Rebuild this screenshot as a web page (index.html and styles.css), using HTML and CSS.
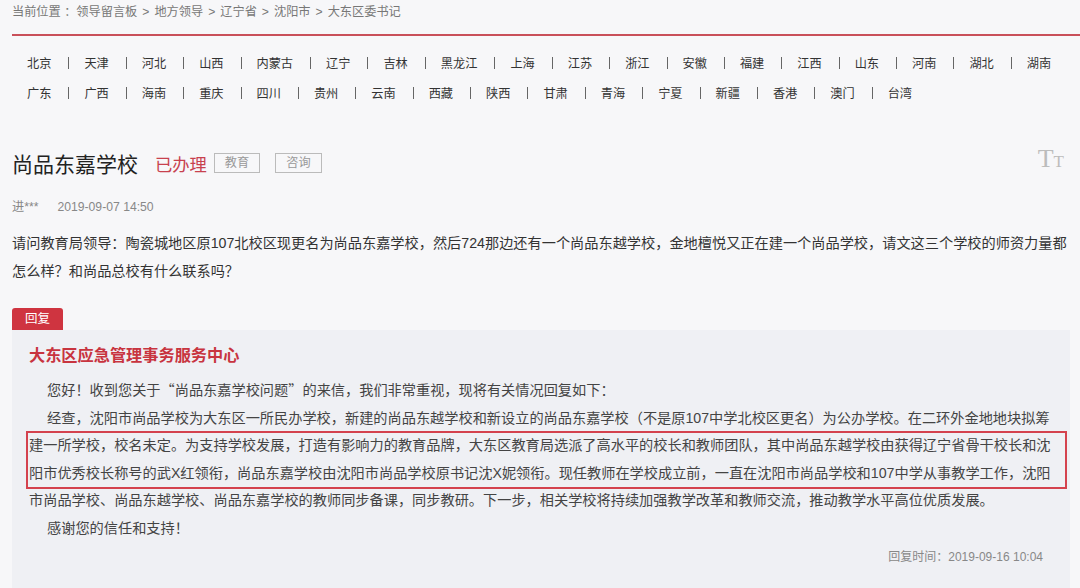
FILE: index.html
```html
<!DOCTYPE html>
<html lang="zh-CN">
<head>
  <meta charset="UTF-8">
  <meta name="viewport" content="width=device-width, initial-scale=1.0">
  <title>尚品东嘉学校</title>
  <link rel="stylesheet" href="styles.css">
</head>
<body>
  <div class="page">
    <!-- 面包屑 -->
    <div class="crumb">当前位置 ：领导留言板<span class="sep">&gt;</span>地方领导<span class="sep">&gt;</span>辽宁省<span class="sep">&gt;</span>沈阳市<span class="sep">&gt;</span>大东区委书记</div>

    <!-- 省份导航 -->
    <div class="provinces">
      <ul>
        <li>北京</li><li>天津</li><li>河北</li><li>山西</li><li>内蒙古</li><li>辽宁</li>
        <li>吉林</li><li>黑龙江</li><li>上海</li><li>江苏</li><li>浙江</li><li>安徽</li>
        <li>福建</li><li>江西</li><li>山东</li><li>河南</li><li>湖北</li><li>湖南</li>
      </ul>
      <ul>
        <li>广东</li><li>广西</li><li>海南</li><li>重庆</li><li>四川</li><li>贵州</li>
        <li>云南</li><li>西藏</li><li>陕西</li><li>甘肃</li><li>青海</li><li>宁夏</li>
        <li>新疆</li><li>香港</li><li>澳门</li><li>台湾</li>
      </ul>
    </div>

    <!-- 留言标题 -->
    <div class="title-row">
      <h1>尚品东嘉学校</h1>
      <span class="status">已办理</span>
      <span class="tag">教育</span>
      <span class="tag">咨询</span>
      <span class="font-size">T<small>T</small></span>
    </div>
    <div class="meta"><span class="author">进***</span><span>2019-09-07 14:50</span></div>

    <p class="question">请问教育局领导：陶瓷城地区原107北校区现更名为尚品东嘉学校，然后724那边还有一个尚品东越学校，金地檀悦又正在建一个尚品学校，请文这三个学校的师资力量都怎么样？和尚品总校有什么联系吗？</p>

    <!-- 回复 -->
    <div class="reply">
      <div class="reply-tab">回复</div>
      <div class="reply-box">
        <h2>大东区应急管理事务服务中心</h2>
        <div class="reply-body">
          <p>您好！收到您关于<span class="cjk">“</span>尚品东嘉学校问题<span class="cjk">”</span>的来信，我们非常重视，现将有关情况回复如下：</p>
          <p>经查，沈阳市尚品学校为大东区一所民办学校，新建的尚品东越学校和新设立的尚品东嘉学校（不是原107中学北校区更名）为公办学校。在二环外金地地块拟筹建一所学校，校名未定。为支持学校发展，打造有影响力的教育品牌，大东区教育局选派了高水平的校长和教师团队，其中尚品东越学校由获得辽宁省骨干校长和沈阳市优秀校长称号的武X红领衔，尚品东嘉学校由沈阳市尚品学校原书记沈X妮领衔。现任教师在学校成立前，一直在沈阳市尚品学校和107中学从事教学工作，沈阳市尚品学校、尚品东越学校、尚品东嘉学校的教师同步备课，同步教研。下一步，相关学校将持续加强教学改革和教师交流，推动教学水平高位优质发展。</p>
          <p>感谢您的信任和支持！</p>
          <div class="mark"></div>
        </div>
        <div class="reply-time">回复时间：2019-09-16 10:04</div>
      </div>
    </div>
  </div>
</body>
</html>
```

FILE: styles.css
```css
body {
  margin: 0;
  background-color: #f7f7f9;
  font-family: "Liberation Sans", "Noto Sans CJK SC", sans-serif;
  color: #333;
}
.page {
  margin-left: 12px;
  width: 1058px;
}
.crumb {
  margin-right: -10px;
  font-size: 12.2px;
  line-height: 20px;
  color: #777;
  padding: 2px 0 12px;
  border-bottom: 2px solid #c9505a;
}
.crumb .sep {
  margin: 0 5px;
}
.provinces {
  margin-top: 13px;
  padding-left: 15px;
  font-size: 12.2px;
  color: #333;
}
.provinces ul {
  list-style: none;
  margin: 0;
  padding: 0;
  display: flex;
  line-height: 30px;
}
.provinces li + li::before {
  content: "";
  display: inline-block;
  width: 1px;
  height: 12px;
  background-color: #666;
  margin: 0 15px 0 17px;
  vertical-align: -1px;
}
.title-row {
  display: flex;
  align-items: center;
  height: 30px;
  margin-top: 39px;
}
h1 {
  margin: 0;
  font-size: 21px;
  font-weight: normal;
  color: #222;
}
.status {
  margin-left: 17px;
  font-size: 17.3px;
  color: #c8414e;
}
.tag {
  margin-left: 7px;
  height: 18px;
  line-height: 18px;
  padding: 0 10px;
  border: 1px solid #bbb;
  font-size: 12.2px;
  color: #999;
}
.tag + .tag {
  margin-left: 15px;
}
.font-size {
  margin-left: auto;
  margin-right: 6px;
  align-self: flex-start;
  font-family: "Liberation Serif", serif;
  font-size: 26px;
  line-height: 22px;
  color: #bcbcbc;
}
.font-size small {
  font-size: 17px;
}
.meta {
  margin-top: 19px;
  font-size: 12.2px;
  line-height: 20px;
  color: #888;
}
.author {
  margin-right: 19px;
}
.question {
  margin: 12px 0 0;
  font-size: 14.2px;
  line-height: 28px;
  color: #333;
}
.reply {
  margin-top: 23px;
}
.reply-tab {
  width: 51px;
  height: 22px;
  line-height: 22px;
  text-align: center;
  background-color: #cf3440;
  color: #fff;
  font-size: 12.5px;
  border-radius: 3px 3px 0 0;
}
.reply-box {
  background-color: #eff0f4;
  padding: 13px 12px 40px 17px;
}
.reply-box h2 {
  margin: 0;
  font-size: 16.2px;
  line-height: 24px;
  color: #c8343f;
}
.reply-body {
  position: relative;
  margin-top: 9px;
  font-size: 14.2px;
  line-height: 27.6px;
  color: #444;
}
.reply-body p {
  margin: 0;
  text-indent: 18px;
}
.cjk {
  font-family: "Noto Sans CJK SC", sans-serif;
}
/* 红框标注 */
.mark {
  position: absolute;
  left: -3px;
  right: -9px;
  top: 55px;
  height: 58px;
  border: 2px solid #d4424e;
  box-sizing: border-box;
}
.reply-time {
  margin-top: 4px;
  padding-right: 15px;
  text-align: right;
  font-size: 12px;
  line-height: 20px;
  color: #888;
}
```
